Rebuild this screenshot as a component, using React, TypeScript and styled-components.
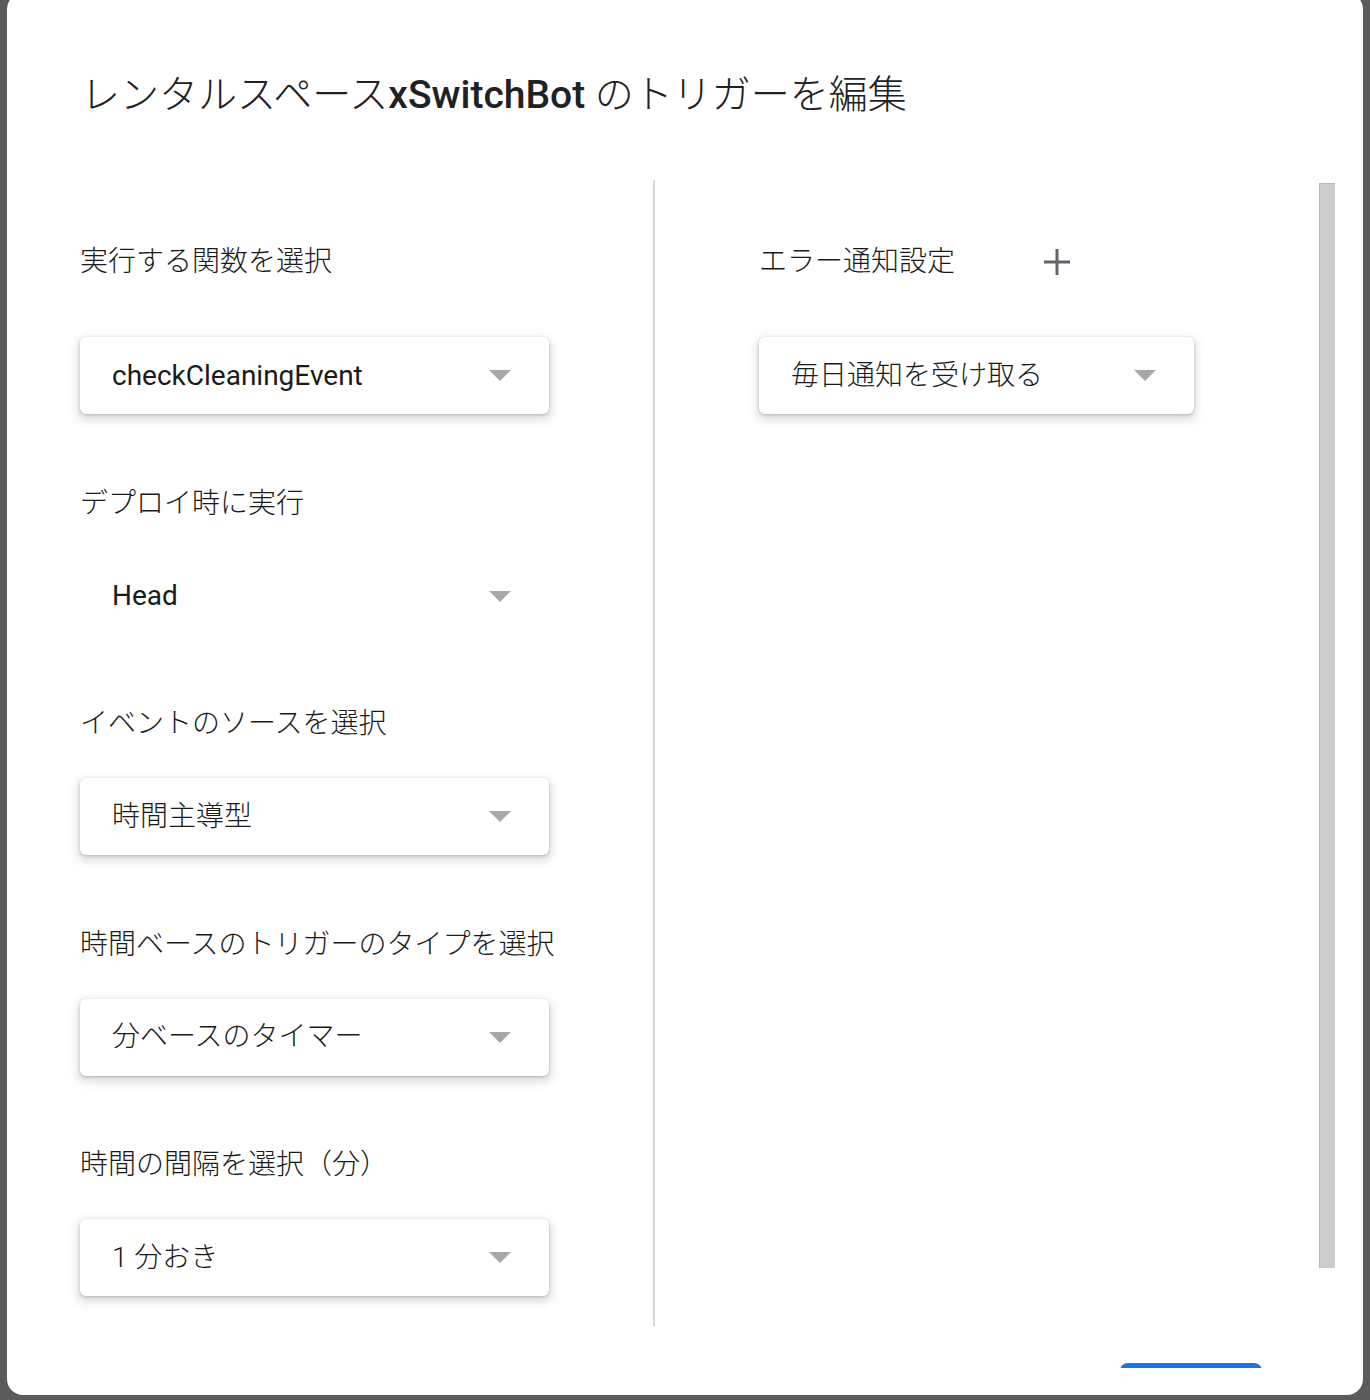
import React from 'react';
import styled, { createGlobalStyle } from 'styled-components';

const GlobalStyle = createGlobalStyle`
  html, body {
    margin: 0;
    height: 1400px;
    overflow: hidden;
    background: #5b5b5b;
    font-family: Roboto, "Noto Sans CJK JP", sans-serif;
  }
`;

type Field = {
  label: string;
  value: string;
  flat?: boolean;
  latin?: boolean;
};

const fields: Field[] = [
  { label: '実行する関数を選択', value: 'checkCleaningEvent', latin: true },
  { label: 'デプロイ時に実行', value: 'Head', flat: true, latin: true },
  { label: 'イベントのソースを選択', value: '時間主導型' },
  { label: '時間ベースのトリガーのタイプを選択', value: '分ベースのタイマー' },
  { label: '時間の間隔を選択（分）', value: '1 分おき' },
];

const App: React.FC = () => {
  return (
    <>
      <GlobalStyle />
      <Dialog>
        <Title>
          レンタルスペース<Brand>xSwitchBot</Brand> のトリガーを編集
        </Title>
        <Body>
          <Content>
            <Columns>
              <LeftColumn>
                {fields.map((f, i) => (
                  <FieldGroup key={f.label}>
                    <Label>{f.label}</Label>
                    <Select $width={469} $offset={i === 0 ? 55 : 34} $flat={f.flat}>
                      <Value $latin={f.latin}>{f.value}</Value>
                      <Arrow />
                    </Select>
                  </FieldGroup>
                ))}
              </LeftColumn>
              <Divider />
              <RightColumn>
                <FieldGroup>
                  <LabelRow>
                    <Label>エラー通知設定</Label>
                    <PlusButton aria-label="追加">
                      <svg width="26" height="26" viewBox="0 0 26 26">
                        <rect x="11.5" y="0" width="3" height="26" fill="#5f6368" />
                        <rect x="0" y="11.5" width="26" height="3" fill="#5f6368" />
                      </svg>
                    </PlusButton>
                  </LabelRow>
                  <Select $width={435} $offset={55}>
                    <Value>毎日通知を受け取る</Value>
                    <Arrow />
                  </Select>
                </FieldGroup>
              </RightColumn>
            </Columns>
            <Footer>
              {/* the save button is scrolled almost out of view: only its top edge shows */}
              <PrimaryButton aria-label="保存" />
            </Footer>
          </Content>
          <ScrollTrack>
            <ScrollThumb />
          </ScrollTrack>
        </Body>
      </Dialog>
    </>
  );
};

export default App;

const Dialog = styled.div`
  box-sizing: border-box;
  margin: -7px 7px 0;
  height: 1402px;
  background: #ffffff;
  border-radius: 16px;
  display: flex;
  flex-direction: column;
  overflow: hidden;
`;

const Title = styled.h2`
  margin: 0;
  padding: 78px 0 61px 74px;
  font-size: 39px;
  line-height: 48px;
  font-weight: 300;
  color: #202124;
  white-space: nowrap;
`;

const Brand = styled.span`
  font-weight: 500;
`;

const Body = styled.div`
  display: flex;
  height: 1188px;
  flex-shrink: 0;
  overflow: hidden;
  padding-left: 73px;
`;

const Content = styled.div`
  flex: 1;
  min-width: 0;
  display: flex;
  flex-direction: column;
`;

const Columns = styled.div`
  display: flex;
  height: 1146px;
  flex-shrink: 0;
`;

const LeftColumn = styled.div`
  box-sizing: border-box;
  width: 573px;
  padding-top: 62px;
  display: flex;
  flex-direction: column;
`;

const RightColumn = styled.div`
  box-sizing: border-box;
  flex: 1;
  padding: 62px 0 0 104px;
`;

const Divider = styled.div`
  width: 2px;
  background: #d3d6da;
`;

const FieldGroup = styled.div`
  display: flex;
  flex-direction: column;

  & + & {
    margin-top: 69.5px;
  }
`;

const Label = styled.div`
  height: 40px;
  font-size: 28px;
  line-height: 40px;
  font-weight: 300;
  color: #1a1a1a;
  white-space: nowrap;
`;

const LabelRow = styled.div`
  display: flex;
  align-items: center;
`;

const PlusButton = styled.span`
  display: flex;
  margin-left: 89px;
  width: 26px;
  height: 26px;
`;

const Select = styled.div<{ $width: number; $offset: number; $flat?: boolean }>`
  box-sizing: border-box;
  margin-top: ${(p) => p.$offset}px;
  width: ${(p) => p.$width}px;
  height: 77px;
  padding: 0 38px 0 32px;
  display: flex;
  align-items: center;
  justify-content: space-between;
  background: #ffffff;
  border-radius: 6px;
  box-shadow: ${(p) =>
    p.$flat
      ? 'none'
      : '0 1px 3px rgba(60, 64, 67, 0.3), 0 4px 8px 3px rgba(60, 64, 67, 0.15)'};
`;

const Value = styled.span<{ $latin?: boolean }>`
  font-size: 28px;
  line-height: 40px;
  font-weight: ${(p) => (p.$latin ? 400 : 300)};
  color: #1a1a1a;
  white-space: nowrap;
`;

const Arrow = styled.span`
  width: 0;
  height: 0;
  border-left: 11px solid transparent;
  border-right: 11px solid transparent;
  border-top: 11px solid #a8a8a8;
`;

const Footer = styled.div`
  display: flex;
  justify-content: flex-end;
  margin-top: 37px;
  padding-right: 56px;
`;

const PrimaryButton = styled.button`
  width: 142px;
  height: 40px;
  flex-shrink: 0;
  border: none;
  border-radius: 8px;
  background: #1a73e8;
`;

const ScrollTrack = styled.div`
  box-sizing: border-box;
  width: 18px;
  flex-shrink: 0;
  margin-right: 27px;
  padding: 3px 0 0 1px;
`;

const ScrollThumb = styled.div`
  box-sizing: border-box;
  width: 16px;
  height: 1085px;
  background: #cccccc;
  border-left: 1px solid #b8b8b8;
  border-top: 1px solid #b8b8b8;
`;
